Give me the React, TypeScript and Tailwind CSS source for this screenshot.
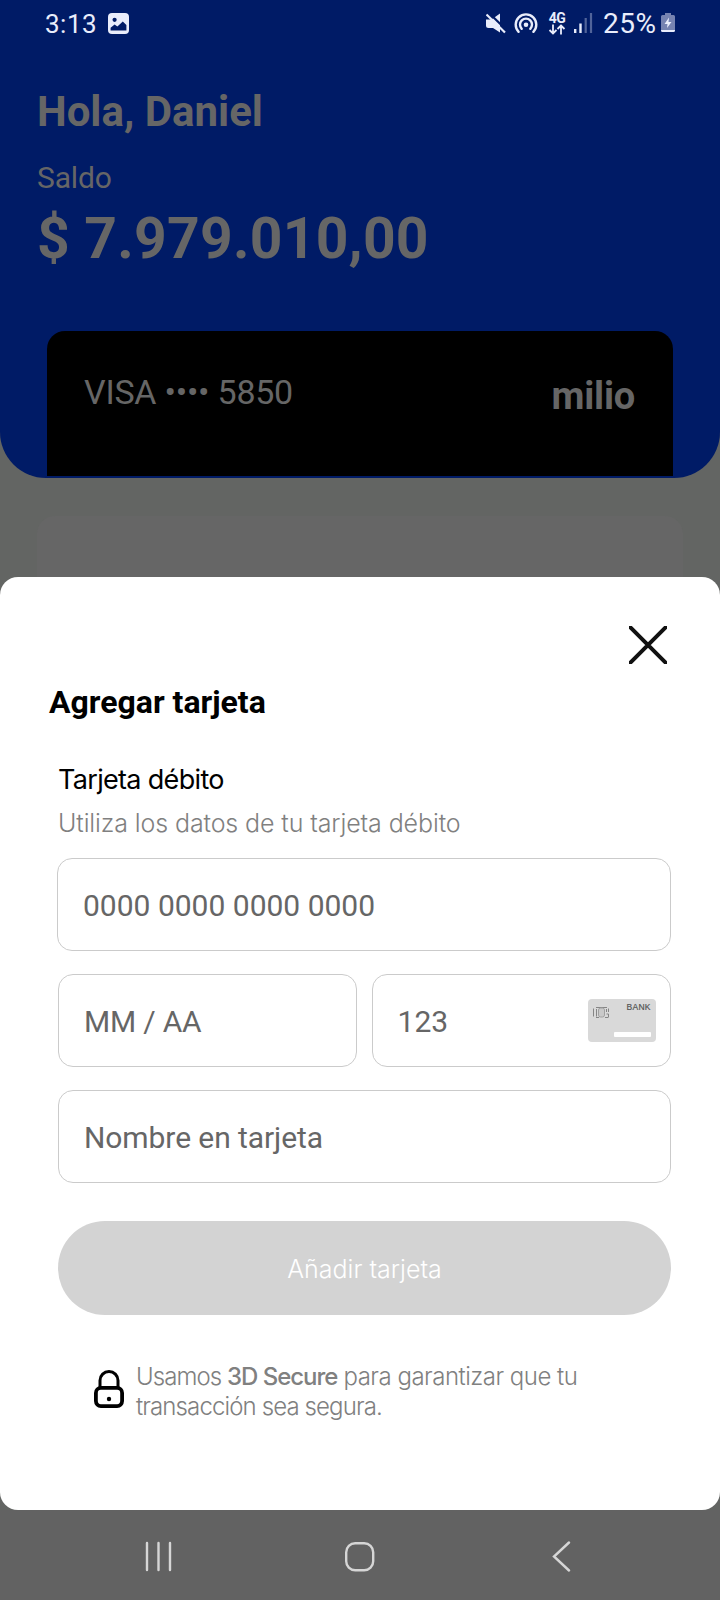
import type { ReactNode } from "react";

function StatusBar() {
    return (
        <div className="flex h-[48px] items-start justify-between pl-[45px] pr-[45px] pt-[8px] text-[#e9edfb]">
            <div className="flex items-start">
                <span className="w-[63px] text-[26px] leading-[32px] tracking-[0.5px]">3:13</span>
                <svg className="mt-[5px]" width="21" height="21" viewBox="0 0 21 21">
                    <rect width="21" height="21" rx="4" fill="currentColor" />
                    <circle cx="6.6" cy="6.8" r="2.1" fill="#001b66" />
                    <path d="M2.6 17.4v-2.6l4-3.2 2.8 2 5.4-5.2 3.6 3.6v5.4z" fill="#001b66" />
                </svg>
            </div>
            <div className="flex items-start">
                <svg className="mt-[5px]" width="21" height="21" viewBox="0 0 21 21">
                    <path d="M0 6.500h5.500L14 .5v19L7 15H2.500Q0 15 0 12.500z" fill="currentColor" />
                    <path d="M3 0l18 17.500" stroke="#001b66" strokeWidth="2.200" />
                    <path d="M.5 1.500l18.500 18" stroke="currentColor" strokeWidth="2.200" />
                </svg>
                <svg className="ml-[7px] mt-[5px]" width="24" height="21" viewBox="0 0 24 21" fill="none" stroke="currentColor" strokeWidth="2.400" strokeLinecap="round">
                    <path d="M4.600 18.800a10.300 10.300 0 1 1 14.800 0" />
                    <path d="M7.700 15.800a6 6 0 1 1 8.600 0" />
                    <circle cx="12" cy="11.700" r="2.300" fill="currentColor" stroke="none" />
                </svg>
                <div className="ml-[10px] mt-[4px] flex w-[18px] flex-col items-center">
                    <span className="text-[14px] font-bold leading-[12px] tracking-[-0.5px]">4G</span>
                    <svg width="18" height="11" viewBox="0 0 18 11" fill="none" stroke="currentColor" strokeWidth="1.800">
                        <path d="M5 .5v9M1.500 6L5 9.500 8.500 6M13 10.500v-9M9.500 5L13 1.500 16.500 5" />
                    </svg>
                </div>
                <svg className="ml-[8px] mt-[5px]" width="19" height="21" viewBox="0 0 19 21" fill="currentColor">
                    <rect x="0" y="16" width="2.400" height="4" />
                    <rect x="5.300" y="10.500" width="2.400" height="9.500" />
                    <rect x="10.600" y="5" width="2.200" height="15" opacity=".35" />
                    <rect x="15.900" y="0" width="2.200" height="20" opacity=".35" />
                </svg>
                <span className="ml-[10px] w-[58px] whitespace-nowrap text-[28px] leading-[32px] tracking-[0.5px]">25%</span>
                <svg className="mt-[5px]" width="14" height="20" viewBox="0 0 14 20">
                    <path d="M4 0h6v2h2.500A1.500 1.500 0 0 1 14 3.500V16H0V3.500A1.500 1.500 0 0 1 1.500 2H4z" fill="#7683b1" />
                    <path d="M0 16.500h14v1a1.500 1.500 0 0 1-1.500 1.500h-11A1.500 1.500 0 0 1 0 17.500z" fill="currentColor" />
                    <path d="M8 4.500L3.500 11h3L6 15l4.500-6h-3z" fill="currentColor" />
                </svg>
            </div>
        </div>
    );
}

function Field({ children, icon, className = "" }: { children: ReactNode; icon?: ReactNode; className?: string }) {
    return (
        <div className={`flex h-[93px] items-center justify-between rounded-[15px] border border-[#cbcbcb] pl-[25px] pr-[14px] text-[30px] leading-[36px] text-[#666666] ${className}`}>
            <span className="mt-[2px] whitespace-nowrap">{children}</span>
            {icon}
        </div>
    );
}

function BankCard() {
    return (
        <svg width="68" height="43" viewBox="0 0 68 43">
            <rect width="68" height="43" rx="4" fill="#d9d9d9" />
            <g fill="none" stroke="#858585" strokeWidth="1">
                <path d="M5.500 9.500v8M8.500 10v7.500M8 8.500h11M8 18.500h3M17 18.500h3M18.500 10v3M20.500 9.500v3.500M18.500 15h2v3.500" />
                <rect x="10.500" y="9" width="6" height="9" rx="2" fill="#c9c9c9" stroke="#a0a0a0" />
            </g>
            <text x="38.500" y="11" fontFamily="Liberation Sans" fontSize="8.500" fill="#555" stroke="#555" strokeWidth=".2" textLength="24">BANK</text>
            <rect x="26" y="33" width="37" height="5" rx="1" fill="#fff" />
        </svg>
    );
}

export default function App() {
    return (
        <div className="flex h-[1600px] w-[720px] flex-col overflow-hidden bg-[#636563] font-[Roboto,sans-serif]">
            <div className="h-[478px] rounded-b-[46px] bg-[#001b66] text-[#666666]">
                <StatusBar />
                <div className="pl-[37px] pt-[39px]">
                    <h1 className="text-[42px] font-bold leading-[50px]">Hola, Daniel</h1>
                    <p className="mt-[23px] text-[30px] leading-[36px] tracking-[-0.15px]">Saldo</p>
                    <p className="mt-[11px] text-[57px] font-bold leading-[64px] tracking-[0.25px]">$ 7.979.010,00</p>
                </div>
                <div className="mx-[47px] mt-[60px] flex h-[145px] items-start justify-between rounded-t-[18px] bg-black pl-[37px] pr-[38px] pt-[41px]">
                    <span className="text-[34px] leading-[40px] tracking-[-0.25px]">VISA •••• 5850</span>
                    <span className="mt-[2px] text-[38px] font-bold leading-[44px] tracking-[-0.2px]">milio</span>
                </div>
            </div>
            <div className="mx-[37px] mt-[38px] h-[61px] rounded-t-[18px] bg-[#666666]" />

            <div className="h-[933px] rounded-[18px] bg-white">
                <div className="flex justify-end pr-[53px] pt-[49px]">
                    <svg width="38" height="38" viewBox="0 0 38 38" stroke="#111" strokeWidth="4">
                        <path d="M0 0l38 38M38 0L0 38" />
                    </svg>
                </div>
                <h2 className="ml-[49px] mt-[19px] text-[32px] font-bold leading-[38px] text-black">Agregar tarjeta</h2>
                <div className="ml-[58px] mr-[49px] flex flex-col font-[Inter,sans-serif]">
                    <p className="mt-[42px] text-[27px] leading-[34px] tracking-[-0.68px] text-black">Tarjeta débito</p>
                    <p className="mt-[10px] text-[25px] font-light leading-[32px] tracking-[-0.11px] text-[#808080]">Utiliza los datos de tu tarjeta débito</p>
                    <div className="mt-[19px] flex flex-col gap-[23px] font-[Roboto,sans-serif]">
                        <Field className="-ml-px">0000 0000 0000 0000</Field>
                        <div className="flex gap-[15px]">
                            <Field className="flex-[299] tracking-[-0.2px]">MM / AA</Field>
                            <Field className="flex-[300]" icon={<BankCard />}>123</Field>
                        </div>
                        <Field className="tracking-[-0.08px]">Nombre en tarjeta</Field>
                    </div>
                    <button className="mt-[38px] h-[94px] rounded-full bg-[#d3d3d3] pt-[3px] text-[25px] font-light text-white">Añadir tarjeta</button>
                    <div className="mt-[47px] flex items-start pl-[36px]">
                        <svg className="mt-[8px]" width="30" height="38" viewBox="0 0 30 38" fill="none" stroke="#000" strokeWidth="3.800">
                            <rect x="1.900" y="17.900" width="26.200" height="18.200" rx="5" />
                            <path d="M6 17.500V10.500a9 9 0 0 1 18 0v7" strokeWidth="3" />
                            <circle cx="15" cy="29" r="2.200" fill="#000" stroke="none" />
                        </svg>
                        <p className="ml-[12px] whitespace-nowrap text-[24px] font-light leading-[30px] text-[#808080]">
                            <span className="tracking-[-0.92px]">Usamos </span>
                            <span className="font-medium tracking-[-1.05px]">3D Secure</span>
                            <span className="tracking-[-0.5px]"> para garantizar que tu</span>
                            <br />
                            <span className="tracking-[-0.88px]">transacción sea segura.</span>
                        </p>
                    </div>
                </div>
            </div>

            <div className="flex flex-1 items-start bg-[#626262] pt-[31px]">
                <svg className="ml-[145px]" width="27" height="31" viewBox="0 0 27 31" stroke="#d6d6d6" strokeWidth="2.400" strokeLinecap="round">
                    <path d="M2 2v27M13.500 2v27M25 2v27" />
                </svg>
                <svg className="ml-[172px]" width="31" height="31" viewBox="0 0 31 31" fill="none" stroke="#d6d6d6" strokeWidth="2.400">
                    <rect x="2.200" y="2.200" width="27" height="27" rx="9" />
                </svg>
                <svg className="ml-[177px]" width="19" height="31" viewBox="0 0 19 31" fill="none" stroke="#d6d6d6" strokeWidth="2.400" strokeLinecap="round">
                    <path d="M17 1.500L2 15.500 17 29.500" />
                </svg>
            </div>
        </div>
    );
}
